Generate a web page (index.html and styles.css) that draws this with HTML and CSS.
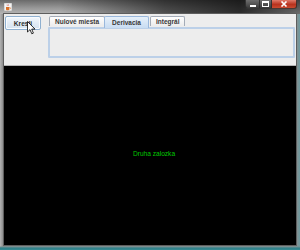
FILE: index.html
```html
<!DOCTYPE html>
<html>
<head>
<meta charset="utf-8">
<link rel="stylesheet" href="styles.css">
</head>
<body>
<div class="window">
  <div class="titlebar">
    <svg class="app-icon" width="8" height="8" viewBox="0 0 8 8">
      <rect x="0" y="0" width="8" height="8" fill="#f4f4f4" stroke="#9a9a9a" stroke-width="0.6"/>
      <path d="M2 4h3.2v2.2q0 1-1 1h-1.2q-1 0-1-1z" fill="#d8702a"/>
      <path d="M5.2 4.6h0.8q0.6 0 0.6 0.7t-0.8 0.7h-0.6" fill="none" stroke="#d8702a" stroke-width="0.6"/>
      <path d="M3 1.5q0.6 0.8 0 1.6M4.2 1.2q0.6 0.9 0 1.8" fill="none" stroke="#c04040" stroke-width="0.5"/>
    </svg>
    <div class="controls">
      <div class="ctl ctl-min"><span class="min-glyph"></span></div>
      <div class="ctl ctl-max"><span class="max-glyph"></span></div>
      <div class="ctl ctl-close">
        <svg width="8" height="6" viewBox="0 0 8 6"><path d="M1.5 0.5L6.5 5.5M6.5 0.5L1.5 5.5" stroke="#fff" stroke-width="1.6"/></svg>
      </div>
    </div>
  </div>
  <div class="client">
    <div class="toolbar">
      <div class="btn">Kresli</div>
      <div class="tabs">
        <div class="tab-row">
          <div class="tab">Nulové miesta</div>
          <div class="tab tab-active">Derivacia</div>
          <div class="tab">Integrál</div>
        </div>
        <div class="tab-panel"></div>
      </div>
      <svg class="cursor" width="9" height="14" viewBox="0 0 9 14">
        <path d="M0.5 0.5L0.5 11L3 8.6L4.8 12.8L6.4 12.1L4.7 8.1L8 8.1Z" fill="#fff" stroke="#000" stroke-width="0.8" stroke-linejoin="round"/>
      </svg>
    </div>
    <div class="canvas">
      <span class="label">Druha zalozka</span>
    </div>
  </div>
</div>
</body>
</html>
```
FILE: styles.css
```css
html, body {
  margin: 0;
  padding: 0;
}
body {
  width: 300px;
  height: 250px;
  overflow: hidden;
  font-family: "Liberation Sans", Arial, sans-serif;
}
.window {
  width: 300px;
  height: 250px;
  display: flex;
  flex-direction: column;
  background:
    linear-gradient(to bottom, rgba(0,0,0,0) 0, rgba(0,0,0,0) 246px, #6f8e92 247px, #2f7f88 248px, #3a8c94 250px),
    linear-gradient(to right, #b4b4b4 0, #8c8c8c 3px, #8c8c8c 296px, #6c9aa0 300px);
}
.titlebar {
  height: 14px;
  flex: none;
  display: flex;
  align-items: flex-start;
  padding-left: 4px;
  background:
    linear-gradient(to right, rgba(0,0,0,0) 20%, rgba(0,0,0,0.55) 55%, rgba(0,0,0,0.75) 80%, rgba(0,0,0,0.4) 100%),
    linear-gradient(to bottom, #6a6a6a 0, #9a9a9a 60%, #b5b5b5 100%);
}
.app-icon {
  margin-top: 3px;
}
.controls {
  margin-left: auto;
  margin-right: 3px;
  display: flex;
  height: 9px;
}
.ctl {
  height: 9px;
  display: flex;
  align-items: center;
  justify-content: center;
  border: 1px solid rgba(40,40,40,0.8);
  border-top: none;
  box-sizing: border-box;
}
.ctl-min {
  width: 15px;
  border-radius: 0 0 0 3px;
  background: linear-gradient(#6e6e6e, #3a3a3a);
}
.ctl-max {
  width: 12px;
  border-left: none;
  background: linear-gradient(#6e6e6e, #3a3a3a);
}
.ctl-close {
  width: 25px;
  border-left: none;
  border-radius: 0 0 3px 0;
  background: linear-gradient(#e07a6a, #b8321e 55%, #c84a30);
}
.min-glyph {
  width: 6px;
  height: 2px;
  margin-top: 3px;
  background: #fff;
}
.max-glyph {
  width: 5px;
  height: 3px;
  border: 1px solid #fff;
  border-top-width: 2px;
}
.client {
  flex: 1;
  margin: 0 4px 5px 4px;
  display: flex;
  flex-direction: column;
  box-shadow: 0 0 0 1px #5e5e5e;
  position: relative;
}
.toolbar {
  height: 52px;
  flex: none;
  box-sizing: border-box;
  background: #ededed;
  border-bottom: 1px solid #b4b4b4;
  display: flex;
  align-items: flex-start;
  padding: 2px 1px 0 1px;
  position: relative;
}
.btn {
  width: 36px;
  height: 14px;
  box-sizing: border-box;
  border: 1px solid #8fb0d0;
  border-radius: 2px;
  background: linear-gradient(#f4f8fc, #e2ecf6 50%, #d4e2f0);
  box-shadow: inset 0 0 0 1px #f8fbff;
  display: flex;
  align-items: center;
  justify-content: center;
  font-size: 6.6px;
  font-weight: bold;
  color: #303030;
}
.tabs {
  flex: 1;
  margin-left: 7px;
  display: flex;
  flex-direction: column;
}
.tab-row {
  display: flex;
  align-items: flex-end;
  height: 11px;
  padding-left: 1px;
  position: relative;
  z-index: 1;
}
.tab {
  height: 10px;
  box-sizing: border-box;
  padding: 0 5px;
  border: 1px solid #a4acb8;
  border-bottom: none;
  border-radius: 2px 2px 0 0;
  background: linear-gradient(#ffffff, #ececec);
  font-size: 6.5px;
  font-weight: bold;
  color: #383838;
  display: flex;
  align-items: center;
  margin-bottom: 1px;
}
.tab + .tab {
  margin-left: -1px;
}
.tab-active {
  height: 12px;
  margin-bottom: -1px;
  padding: 0 7px;
  border-color: #9ab8dc;
  background: linear-gradient(#e6f0fa, #c8dcf2);
}
.tab-active + .tab {
  margin-left: 1px;
}
.tab-panel {
  height: 31px;
  box-sizing: border-box;
  border: 2px solid #bcd0e8;
  border-radius: 1px;
  background: #ededed;
}
.cursor {
  position: absolute;
  left: 23px;
  top: 7px;
}
.canvas {
  flex: 1;
  background: #000;
  display: flex;
  align-items: center;
  justify-content: center;
  padding: 0 0 4px 8px;
}
.label {
  color: #00c800;
  font-size: 6.6px;
}
```
